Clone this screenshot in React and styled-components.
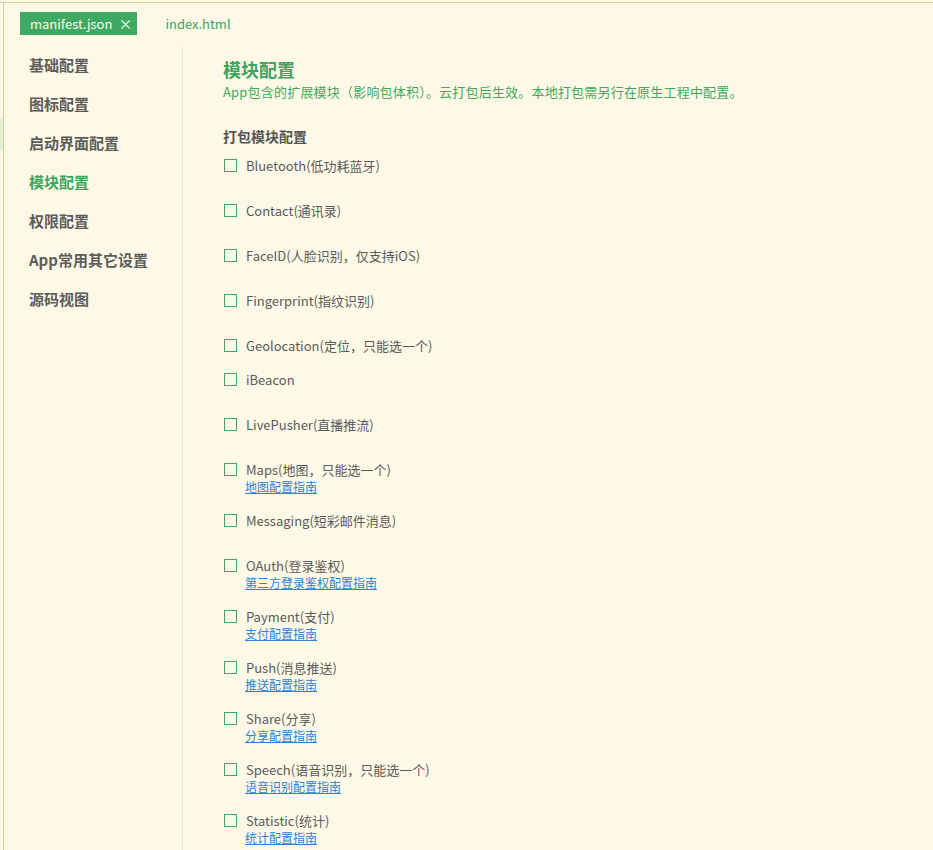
import React from 'react'
import styled, { createGlobalStyle } from 'styled-components'

const GlobalStyle = createGlobalStyle`
	html, body {
		margin: 0;
		padding: 0;
		background: #fef9e7;
	}
	body {
		font-family: "Noto Sans CJK SC", "Noto Sans", sans-serif;
		color: #5a5a5a;
	}
`

const menu = ['基础配置', '图标配置', '启动界面配置', '模块配置', '权限配置', 'App常用其它设置', '源码视图']

const modules = [
	{ name: 'Bluetooth(低功耗蓝牙)', space: 11 },
	{ name: 'Contact(通讯录)', space: 11 },
	{ name: 'FaceID(人脸识别，仅支持iOS)', space: 11 },
	{ name: 'Fingerprint(指纹识别)', space: 11 },
	{ name: 'Geolocation(定位，只能选一个)', space: 0 },
	{ name: 'iBeacon', space: 11 },
	{ name: 'LivePusher(直播推流)', space: 11 },
	{ name: 'Maps(地图，只能选一个)', link: '地图配置指南' },
	{ name: 'Messaging(短彩邮件消息)', space: 11 },
	{ name: 'OAuth(登录鉴权)', link: '第三方登录鉴权配置指南' },
	{ name: 'Payment(支付)', link: '支付配置指南' },
	{ name: 'Push(消息推送)', link: '推送配置指南' },
	{ name: 'Share(分享)', link: '分享配置指南' },
	{ name: 'Speech(语音识别，只能选一个)', link: '语音识别配置指南' },
	{ name: 'Statistic(统计)', link: '统计配置指南' },
]

function ModuleItem({ name, link, space }) {
	return (
		<Item>
			<Row>
				<Check />
				<Label>{name}</Label>
			</Row>
			{link ? <Guide href="#">{link}</Guide> : <Spacer h={space} />}
		</Item>
	)
}

function App() {
	return (
		<>
			<GlobalStyle />
			<Page>
				<Edge>
					<EdgeMark />
				</Edge>
				<Frame>
					<Tabs>
						<Tab active>
							manifest.json<Close>×</Close>
						</Tab>
						<Tab>index.html</Tab>
					</Tabs>
					<Body>
						<Sidebar>
							{menu.map((m) => (
								<MenuItem key={m} active={m === '模块配置'}>
									{m}
								</MenuItem>
							))}
						</Sidebar>
						<Content>
							<Title>模块配置</Title>
							<Sub>App包含的扩展模块（影响包体积）。云打包后生效。本地打包需另行在原生工程中配置。</Sub>
							<Heading>打包模块配置</Heading>
							{modules.map((m) => (
								<ModuleItem key={m.name} {...m} />
							))}
						</Content>
					</Body>
				</Frame>
			</Page>
		</>
	)
}

const Page = styled.div`
	display: flex;
	margin-top: 2px;
	border-top: 1px solid #dccf9f;
	height: 848px;
	overflow: hidden;
`
const Edge = styled.div`
	width: 3px;
	flex-shrink: 0;
`
const EdgeMark = styled.div`
	margin-top: 114px;
	height: 34px;
	background: #e4efd3;
`
const Frame = styled.div`
	flex: 1;
	border-left: 1px solid #d8cb9b;
	display: flex;
	flex-direction: column;
`
const Tabs = styled.div`
	height: 42px;
	flex-shrink: 0;
	display: flex;
	align-items: flex-start;
	padding: 9px 0 0 16px;
	box-sizing: border-box;
	column-gap: 8px;
`
const Tab = styled.div`
	height: 23px;
	line-height: 23px;
	padding: ${(p) => (p.active ? '0 5px 0 10px' : '0 0 0 20px')};
	font-size: 13px;
	color: ${(p) => (p.active ? '#fdfbe9' : '#3aa45d')};
	background: ${(p) => (p.active ? '#3fa963' : 'transparent')};
	display: flex;
	align-items: center;
`
const Close = styled.span`
	margin-left: 6px;
	font-size: 14px;
`
const Body = styled.div`
	flex: 1;
	display: flex;
`
const Sidebar = styled.div`
	width: 179px;
	flex-shrink: 0;
	border-right: 1px solid #efe5c6;
	padding: 0 0 0 25px;
	box-sizing: border-box;
	margin-top: 2px;
`
const MenuItem = styled.div`
	height: 39px;
	line-height: 39px;
	font-size: 15px;
	font-weight: bold;
	color: ${(p) => (p.active ? '#3fa55f' : '#5c5c5c')};
	&:first-child {
		margin-top: -2px;
	}
`
const Content = styled.div`
	flex: 1;
	padding: 13px 0 0 40px;
`
const Title = styled.div`
	font-size: 18px;
	font-weight: bold;
	line-height: 22px;
	color: #3fa45f;
`
const Sub = styled.div`
	margin-top: 3px;
	font-size: 13px;
	line-height: 18px;
	letter-spacing: 0.2px;
	color: #3fa85e;
`
const Heading = styled.div`
	margin-top: 25px;
	font-size: 14px;
	font-weight: bold;
	line-height: 20px;
	color: #555;
	margin-bottom: 11px;
`
const Item = styled.div`
	margin-bottom: 17px;
`
const Row = styled.div`
	display: flex;
	align-items: center;
	height: 17px;
`
const Check = styled.span`
	width: 11px;
	height: 11px;
	border: 1px solid #3fa862;
	margin-left: 1px;
	margin-right: 9px;
`
const Label = styled.span`
	font-size: 13px;
	line-height: 17px;
	color: #5a5a5a;
`
const Guide = styled.a`
	display: block;
	margin-left: 22px;
	font-size: 12px;
	line-height: 17px;
	color: #2a82d6;
	text-decoration: underline;
`
const Spacer = styled.div`
	height: ${(p) => p.h}px;
`

export default App
